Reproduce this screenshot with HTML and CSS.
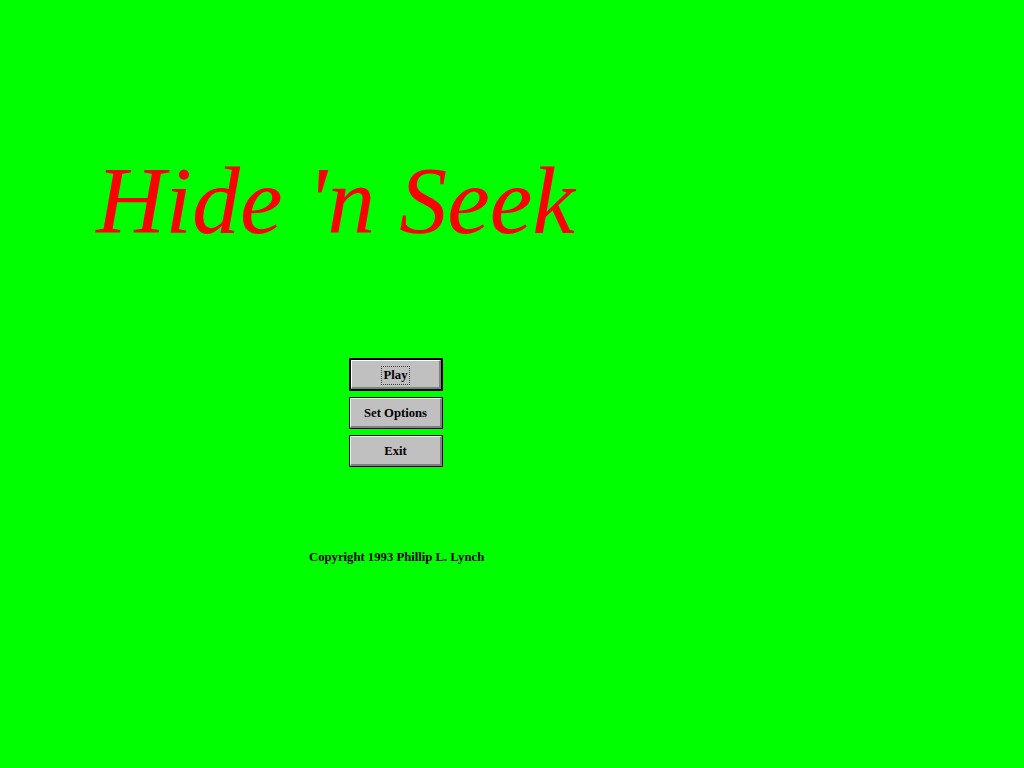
FILE: index.html
```html
<!DOCTYPE html>
<html>
<head>
<meta charset="utf-8">
<title>Hide 'n Seek</title>
<link rel="stylesheet" href="styles.css">
</head>
<body>
<main class="screen">
  <h1 class="title">Hide 'n Seek</h1>
  <div class="menu">
    <button class="btn btn-default"><span class="face"><span class="focus">Play</span></span></button>
    <button class="btn"><span class="face">Set Options</span></button>
    <button class="btn"><span class="face">Exit</span></button>
  </div>
  <p class="copyright">Copyright 1993 Phillip L. Lynch</p>
</main>
</body>
</html>
```
FILE: styles.css
```css
html, body {
  margin: 0;
  padding: 0;
  background: #00ff00;
}
.screen {
  width: 1024px;
  height: 768px;
  background: #00ff00;
  padding-top: 153px;
  box-sizing: border-box;
  font-family: "Liberation Serif", "Times New Roman", serif;
}
.title {
  margin: 0 0 0 96px;
  font-size: 96px;
  line-height: 96px;
  font-style: italic;
  font-weight: normal;
  color: #ff0000;
  white-space: nowrap;
}
.menu {
  margin: 109px 0 0 349px;
  display: flex;
  flex-direction: column;
  gap: 6px;
  width: 94px;
}
.btn {
  display: block;
  width: 94px;
  height: 32px;
  padding: 0;
  margin: 0;
  border: 1px solid #000;
  background: #c0c0c0;
  font-family: "Liberation Serif", "Times New Roman", serif;
  font-weight: bold;
  font-size: 12.7px;
  color: #000;
  cursor: default;
}
.btn-default {
  border-width: 2px;
  height: 33px;
}
.face {
  display: flex;
  align-items: center;
  justify-content: center;
  height: 100%;
  padding-top: 2px;
  box-sizing: border-box;
  border-top: 1px solid #fff;
  border-left: 1px solid #fff;
  border-right: 2px solid #808080;
  border-bottom: 2px solid #808080;
}
.focus {
  outline: 1px dotted #404040;
  outline-offset: 1px;
  padding: 0 1px;
}
.copyright {
  margin: 83px 0 0 309px;
  font-size: 12.7px;
  font-weight: bold;
  color: #000;
  line-height: 14px;
}
```
